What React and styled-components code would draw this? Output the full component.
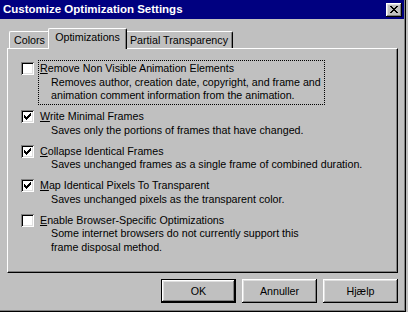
import React from "react";
import styled, { createGlobalStyle } from "styled-components";

const GlobalStyle = createGlobalStyle`
  html, body { margin: 0; padding: 0; background: #c0c0c0; }
  body { font-family: "Liberation Sans", Arial, sans-serif; }
`;

const Win = styled.div`
  width: 406px;
  height: 312px;
  box-sizing: border-box;
  padding-right: 1px;
  background: #c0c0c0;
  border-right: 1px solid #000;
  border-bottom: 1px solid #000;
  box-shadow: inset -1px -1px #808080;
  display: flex;
  flex-direction: column;
  font-family: "Liberation Sans", Arial, sans-serif;
  font-size: 10.7px;
  color: #000;
`;

const TitleBar = styled.div`
  height: 19px;
  flex: none;
  background: #000080;
  color: #fff;
  display: flex;
  align-items: center;
  justify-content: space-between;
  padding: 0 2px 0 3px;
`;

const Title = styled.span`
  font-weight: bold;
  font-size: 11.5px;
  line-height: 19px;
  white-space: nowrap;
`;

const CloseBtn = styled.div`
  width: 16px;
  height: 14px;
  box-sizing: border-box;
  background: #c0c0c0;
  box-shadow: inset -1px -1px #000, inset 1px 1px #fff, inset -2px -2px #808080, inset 2px 2px #dfdfdf;
  display: flex;
  align-items: center;
  justify-content: center;
  padding: 0 0 1px 0;
`;

const Body = styled.div`
  flex: 1;
  display: flex;
  flex-direction: column;
  padding: 9px 6px 0 7px;
`;

const TabStrip = styled.div`
  height: 20px;
  display: flex;
  align-items: flex-end;
  padding-left: 2px;
  position: relative;
  z-index: 1;
`;

const Tab = styled.div`
  position: relative;
  z-index: ${(p) => (p.$active ? 2 : 1)};
  box-sizing: border-box;
  width: ${(p) => p.$w + (p.$active ? 4 : 0)}px;
  height: ${(p) => (p.$active ? 21 : 17)}px;
  margin: ${(p) => (p.$active ? "0 -2px -1px -2px" : "0")};
  padding-bottom: ${(p) => (p.$active ? 3 : 0)}px;
  background: #c0c0c0;
  border-top: 1px solid #fff;
  border-left: 1px solid #fff;
  border-right: 1px solid #000;
  border-radius: 2px 2px 0 0;
  box-shadow: inset -1px 0 #808080;
  display: flex;
  align-items: center;
  justify-content: center;
  white-space: nowrap;
  line-height: 13px;
`;

const Panel = styled.div`
  height: 225px;
  box-sizing: border-box;
  border-top: 1px solid #fff;
  border-left: 1px solid #fff;
  border-right: 1px solid #000;
  border-bottom: 1px solid #000;
  box-shadow: inset -1px -1px #808080;
  padding: 11px 0 0 13px;
  display: flex;
  flex-direction: column;
  gap: 3.5px;
`;

const OptionRow = styled.div`
  display: flex;
  align-items: flex-start;
  gap: 4px;
`;

const Check = styled.div`
  flex: none;
  width: 13px;
  height: 13px;
  box-sizing: border-box;
  margin-top: 2px;
  background: #fff;
  box-shadow: inset 1px 1px #808080, inset -1px -1px #fff, inset 2px 2px #000, inset -2px -2px #dfdfdf;
  display: flex;
  align-items: flex-start;
  justify-content: flex-start;
  padding: 3px 0 0 3px;
`;

const OptionText = styled.div`
  border: 1px ${(p) => (p.$focus ? "dotted #000" : "solid transparent")};
  padding: 1px 3px 1px 1px;
  line-height: 13.5px;
  white-space: nowrap;
`;

const Label = styled.div``;

const Desc = styled.div`
  padding-left: 11px;
`;

const ButtonRow = styled.div`
  display: flex;
  justify-content: flex-end;
  gap: 6px;
  margin-top: 6px;
`;

const Button = styled.button`
  width: 75px;
  height: 24px;
  box-sizing: border-box;
  margin: 0;
  padding: 0;
  background: #c0c0c0;
  color: #000;
  font-family: inherit;
  font-size: 10.7px;
  border: 1px solid ${(p) => (p.$default ? "#000" : "transparent")};
  box-shadow: ${(p) =>
    p.$default
      ? "inset -1px -1px #000, inset 1px 1px #fff, inset -2px -2px #808080, inset 2px 2px #dfdfdf"
      : "inset -1px -1px #000, inset 1px 1px #fff, inset -2px -2px #808080, inset 2px 2px #dfdfdf"};
  ${(p) => (!p.$default ? "border: none;" : "")}
`;

const CheckMark = () => (
  <svg width="7" height="7" viewBox="0 0 7 7" shapeRendering="crispEdges">
    <path
      fill="#000"
      d="M6 0h1v1h-1z M5 1h2v1h-2z M0 2h1v1h-1z M4 2h3v1h-3z M0 3h2v1h-2z M3 3h3v1h-3z M0 4h5v1h-5z M1 5h3v1h-3z M2 6h1v1h-1z"
    />
  </svg>
);

const CloseGlyph = () => (
  <svg width="8" height="7" viewBox="0 0 8 7" shapeRendering="crispEdges">
    <path
      fill="#000"
      d="M0 0h2v1h-2z M6 0h2v1h-2z M1 1h2v1h-2z M5 1h2v1h-2z M2 2h4v1h-4z M3 3h2v1h-2z M2 4h4v1h-4z M1 5h2v1h-2z M5 5h2v1h-2z M0 6h2v1h-2z M6 6h2v1h-2z"
    />
  </svg>
);

const options = [
  {
    key: "R",
    rest: "emove Non Visible Animation Elements",
    desc: [
      "Removes author, creation date, copyright, and frame and",
      "animation comment information from the animation.",
    ],
    checked: false,
    focus: true,
  },
  {
    key: "W",
    rest: "rite Minimal Frames",
    desc: ["Saves only the portions of frames that have changed."],
    checked: true,
  },
  {
    key: "C",
    rest: "ollapse Identical Frames",
    desc: ["Saves unchanged frames as a single frame of combined duration."],
    checked: true,
  },
  {
    key: "M",
    rest: "ap Identical Pixels To Transparent",
    desc: ["Saves unchanged pixels as the transparent color."],
    checked: true,
  },
  {
    key: "E",
    rest: "nable Browser-Specific Optimizations",
    desc: [
      "Some internet browsers do not currently support this",
      "frame disposal method.",
    ],
    checked: false,
  },
];

export default function App() {
  return (
    <>
      <GlobalStyle />
      <Win>
        <TitleBar>
          <Title>Customize Optimization Settings</Title>
          <CloseBtn>
            <CloseGlyph />
          </CloseBtn>
        </TitleBar>
        <Body>
          <TabStrip>
            <Tab $w={41}>Colors</Tab>
            <Tab $w={75} $active>
              Optimizations
            </Tab>
            <Tab $w={108}>Partial Transparency</Tab>
          </TabStrip>
          <Panel>
            {options.map((o) => (
              <OptionRow key={o.key}>
                <Check>{o.checked && <CheckMark />}</Check>
                <OptionText $focus={o.focus}>
                  <Label>
                    <u>{o.key}</u>
                    {o.rest}
                  </Label>
                  {o.desc.map((d) => (
                    <Desc key={d}>{d}</Desc>
                  ))}
                </OptionText>
              </OptionRow>
            ))}
          </Panel>
          <ButtonRow>
            <Button $default>OK</Button>
            <Button>Annuller</Button>
            <Button>Hjælp</Button>
          </ButtonRow>
        </Body>
      </Win>
    </>
  );
}
